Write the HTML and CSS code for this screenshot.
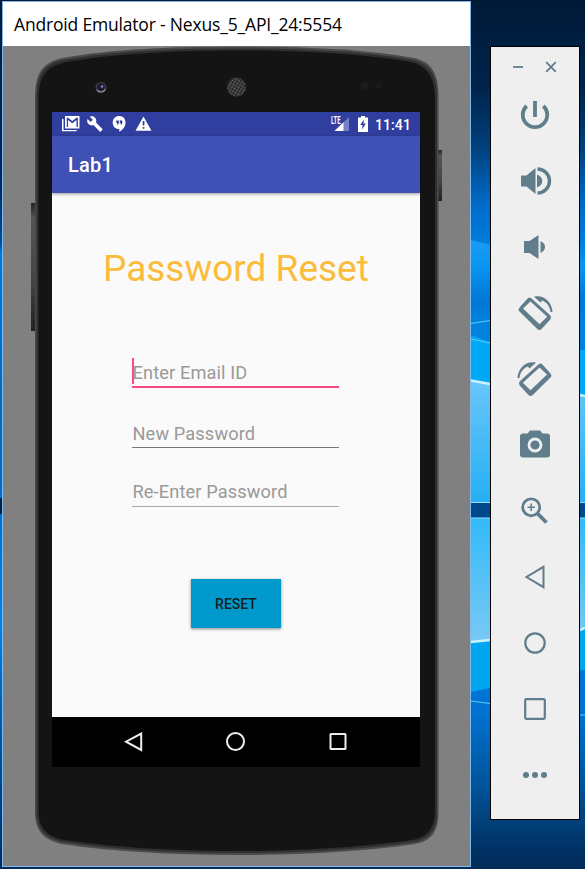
FILE: index.html
```html
<!DOCTYPE html>
<html lang="en">
<head>
<meta charset="utf-8">
<title>Android Emulator</title>
<link rel="stylesheet" href="styles.css">
</head>
<body>
<svg class="wallpaper" viewBox="0 0 585 869" aria-hidden="true">
  <defs>
    <linearGradient id="sky" x1="0" y1="0" x2="0" y2="1">
      <stop offset="0" stop-color="#001a38"/><stop offset=".1" stop-color="#00234a"/>
      <stop offset=".17" stop-color="#00407c"/><stop offset=".235" stop-color="#006bc8"/>
      <stop offset=".27" stop-color="#0078d8"/><stop offset=".3" stop-color="#0090ee"/><stop offset=".34" stop-color="#0074d2"/>
      <stop offset=".37" stop-color="#0082dc"/><stop offset=".69" stop-color="#0091e6"/>
      <stop offset=".75" stop-color="#0078dc"/><stop offset=".82" stop-color="#0072d0"/>
      <stop offset=".9" stop-color="#00559c"/><stop offset="1" stop-color="#002b58"/>
    </linearGradient>
    <linearGradient id="edge" x1="0" y1="0" x2="0" y2="1">
      <stop offset="0" stop-color="#001a38"/><stop offset=".22" stop-color="#002a58"/>
      <stop offset=".28" stop-color="#00509a"/><stop offset=".29" stop-color="#0078d8"/>
      <stop offset=".45" stop-color="#006cc0"/><stop offset=".56" stop-color="#006cc4"/>
      <stop offset=".72" stop-color="#0084e6"/><stop offset=".8" stop-color="#0064b8"/>
      <stop offset="1" stop-color="#002b58"/>
    </linearGradient>
    <linearGradient id="glow" x1="0" y1="0" x2="0" y2="1">
      <stop offset="0" stop-color="#1a9df6"/><stop offset="1" stop-color="#0090ee" stop-opacity="0"/>
    </linearGradient>
    <linearGradient id="pane1" x1="0" y1="0" x2="0" y2="1">
      <stop offset="0" stop-color="#69c6fa"/><stop offset="1" stop-color="#25aff2"/>
    </linearGradient>
    <linearGradient id="pane2" x1="0" y1="0" x2="0" y2="1">
      <stop offset="0" stop-color="#31baf8"/><stop offset="1" stop-color="#79c8f4"/>
    </linearGradient>
    <linearGradient id="corner" x1="0" y1="0" x2="0" y2="1">
      <stop offset="0" stop-color="#003f7c" stop-opacity="0"/><stop offset="1" stop-color="#002b58" stop-opacity=".6"/>
    </linearGradient>
  </defs>
  <rect width="585" height="869" fill="url(#sky)"/>
  <rect width="3" height="869" fill="url(#edge)"/>
  <path d="M471 240L490 245V300H471ZM580 260H585V310H580Z" fill="url(#glow)"/>
  <path d="M471 335L490 342V384L471 380ZM580 350H585V397H580Z" fill="#00a9f6"/>
  <path d="M471 380L490 384V503H471ZM580 395H585V503H580Z" fill="url(#pane1)"/>
  <path d="M471 518H490V640L471 642ZM580 518H585V628H580Z" fill="url(#pane2)"/>
  <path d="M471 642L490 640V688L471 692ZM580 630H585V670H580Z" fill="#00a5f0"/>
  <rect x="471" y="503" width="114" height="15" fill="#00498c"/>
  <rect y="498" width="3" height="16" fill="#002040"/>
  <path d="M471 502.500H490M471 518H490M580 502.500H585M580 518H585" stroke="#9bdcff"/>
  <path d="M471 323.500L490 320.500M471 701L490 703.500M580 715H585M471 339L490 343" stroke="#5fccf6" fill="none"/>
  <path d="M471 380.500L490 384M471 642L490 640M580 395L585 396M580 630L585 628" stroke="#c9f3ff" stroke-width="2.500"/>
  <rect x="471" y="800" width="114" height="69" fill="url(#corner)"/>
</svg>

<main class="desktop">
  <section class="window">
    <header class="titlebar">Android Emulator - Nexus_5_API_24:5554</header>
    <div class="stage">
      <svg class="phone" viewBox="3 46 467 820" aria-hidden="true">
        <defs>
          <pattern id="mesh" width="3" height="3" patternUnits="userSpaceOnUse" patternTransform="rotate(30)">
            <rect width="3" height="3" fill="#242424"/><circle cx="1.500" cy="1.500" r=".9" fill="#707070"/>
          </pattern>
          <linearGradient id="key" x1="0" y1="0" x2="0" y2="1"><stop stop-color="#222"/><stop offset=".12" stop-color="#555"/><stop offset=".6" stop-color="#444"/><stop offset="1" stop-color="#222"/></linearGradient>
        </defs>
        <rect x="31" y="203" width="5" height="128" fill="url(#key)"/>
        <rect x="437" y="150" width="5" height="51" fill="url(#key)"/>
        <path d="M35 98C35 72 43 63 62 58C112 49 174 46.500 237 46.500S362 49 414 58C431 62 438.500 72 438.500 98V812C438.500 832 431 841 415 844C365 851.500 302 855 237 855S112 851.500 62 844C44 840 35 831 35 812Z" fill="#4a4a4a"/>
        <path d="M36.500 98C36.500 73 45 64 63 60C112 51 174 48.500 237 48.500S361 51 413 60C429 64 437 74 437 98V812C437 831 429 839 414 842C365 849.500 302 853 237 853S112 849.500 63 842C45 838 36.500 830 36.500 812Z" fill="#303030"/>
        <path d="M38.500 100C38.500 76 46 67 64 62.500C112 53.500 174 50.500 237 50.500S361 53.500 411 62C427 66 435 77 435 100V810C435 829 427 837 412 840C364 847 302 851 237 851S112 847 64 840C46 836 38.500 828 38.500 810Z" fill="#141414"/>
        <circle cx="101" cy="87.500" r="5.500" fill="#3b3b4a"/>
        <circle cx="101" cy="87" r="3.700" fill="#191933"/>
        <path d="M97 90A5 5 0 0 0 105.500 89" fill="none" stroke="#85858e" stroke-width="1.300"/>
        <circle cx="102" cy="86.500" r="1.300" fill="#8787b5"/>
        <circle cx="236.500" cy="87" r="9.500" fill="url(#mesh)"/>
        <circle cx="365" cy="86" r="4" fill="#1c1c1c"/><circle cx="378.500" cy="86" r="2.500" fill="#1c1c1c"/>
      </svg>

      <div class="screen">
        <div class="statusbar">
          <svg class="notices" viewBox="0 0 94 18">
            <g fill="#fff">
              <path d="M0 3H1.500V14H14.500V15.300H0Z"/>
              <path fill-rule="evenodd" d="M3 0H17.500V12.500H3ZM4.800 1.800V11H6V4L10.300 7.300L14.500 4V11H15.900V1.800H14.500L10.300 5L6 1.800Z"/>
              <path transform="translate(24.500 -.400) scale(.7)" d="M22.700 19l-9.100-9.100c.9-2.300.4-5-1.500-6.900-2-2-5-2.400-7.400-1.300L9 6 6 9 1.600 4.700C.4 7.100.9 10.100 2.900 12.100c1.900 1.900 4.600 2.400 6.900 1.500l9.100 9.100c.4.400 1 .4 1.400 0l2.300-2.300c.5-.4.500-1.100.1-1.400z"/>
              <path d="M57.300 0C61 0 63.500 2.800 63.500 6.500C63.500 10.500 61 13.800 57.300 15.800V13C53 13 50.700 10.300 50.700 6.500S53.600 0 57.300 0Z"/>
              <path d="M81.500 .500L89.500 14.700H73.500Z"/>
            </g>
            <path d="M54.300 4.500H56.800V7Q56.800 8.500 55.300 9V7H54.300ZM57.800 4.500H60.300V7Q60.300 8.500 58.800 9V7H57.800ZM80.700 5H82.400V9.500H80.700ZM80.700 11H82.400V12.700H80.700Z" fill="#303f9f"/>
          </svg>
          <div class="system">
            <svg class="signal" viewBox="0 0 20 18">
              <path d="M19 1V15H4.500Z" fill="#7680c2"/><path d="M13.500 6.300V15H4.500Z" fill="#fff"/>
              <text class="lte" x="1" y="7.600" textLength="9.500" lengthAdjust="spacingAndGlyphs">LTE</text>
            </svg>
            <svg class="battery" viewBox="0 0 10 16"><path d="M3 0H7V1.500H10V16H0V1.500H3Z" fill="#fff"/><path d="M6 3.500L2.200 9H4.500L4 13.500L7.800 7.500H5.500Z" fill="#303f9f"/></svg>
            <span class="clock">11:41</span>
          </div>
        </div>
        <div class="appbar">Lab1</div>
        <form class="content">
          <h1 class="heading">Password Reset</h1>
          <div class="field focused"><span>Enter Email ID</span></div>
          <div class="field"><span>New Password</span></div>
          <div class="field last"><span>Re-Enter Password</span></div>
          <button class="reset" type="button">RESET</button>
        </form>
        <nav class="navbar">
          <svg viewBox="0 0 20 20"><path d="M17.200 1.500V18L2 9.700Z"/></svg>
          <svg viewBox="0 0 20 20"><circle cx="9.500" cy="9.500" r="8.500"/></svg>
          <svg viewBox="0 0 20 20"><rect x="2.500" y="2" width="15" height="15" rx=".5"/></svg>
        </nav>
      </div>
    </div>
  </section>

  <aside class="tools">
    <div class="controls">
      <svg viewBox="0 0 12 12"><path d="M1 6H11"/></svg>
      <svg viewBox="0 0 12 12"><path d="M1.200 1.200L10.800 10.800M10.800 1.200L1.200 10.800"/></svg>
    </div>
    <svg class="tool" viewBox="-18 -18 36 36"><g fill="none" stroke="#607d8b" stroke-width="3.800"><path d="M0-14V2" /><path d="M-8.300-9A12.200 12.200 0 1 0 8.300-9"/></g></svg>
    <svg class="tool" viewBox="-18 -18 36 36"><path d="M-14-5.500H-8.500L.5-13V13L-8.500 5.500H-14ZM2-6.500C9-4 9 4 2 6.500Z" fill="#607d8b"/><path d="M2.500-12A12 12 0 0 1 2.500 12" fill="none" stroke="#607d8b" stroke-width="3.400"/></svg>
    <svg class="tool" viewBox="-18 -18 36 36"><path d="M-11-6H-5.500L3.500-12V12L-5.500 6H-11ZM5.500-6C11.500-3.500 11.500 3.500 5.500 6Z" fill="#607d8b"/></svg>
    <svg class="tool" viewBox="-18 -18 36 36"><use href="#rotate"/></svg>
    <svg class="tool" viewBox="-18 -18 36 36"><use href="#rotate" transform="scale(-1 1)"/></svg>
    <svg class="tool" viewBox="-18 -18 36 36"><path d="M-12-11.500H-7.500L-5-14.500H5L7.500-11.500H12Q15-11.500 15-8.500V9.500Q15 12.500 12 12.500H-12Q-15 12.500-15 9.500V-8.500Q-15-11.500-12-11.500Z" fill="#607d8b"/><circle r="6" fill="none" stroke="#efefef" stroke-width="2.800"/></svg>
    <svg class="tool" viewBox="-18 -18 36 36"><g fill="none" stroke="#607d8b"><circle cx="-3.800" cy="-3.700" r="8.500" stroke-width="2.800"/><path d="M2.500 2.500L11.500 11.500" stroke-width="3.800"/><path d="M-7.500-3.700H0M-3.800-7.500V0" stroke-width="1.500"/></g></svg>
    <svg class="tool" viewBox="-18 -18 36 36"><path d="M8.500-10.200V10.200L-8.500 0Z" fill="none" stroke="#607d8b" stroke-width="2"/></svg>
    <svg class="tool" viewBox="-18 -18 36 36"><circle r="9.700" fill="none" stroke="#607d8b" stroke-width="2.200"/></svg>
    <svg class="tool" viewBox="-18 -18 36 36"><rect x="-9.800" y="-9.800" width="19.600" height="19.600" rx="1" fill="none" stroke="#607d8b" stroke-width="2.200"/></svg>
    <svg class="tool" viewBox="-18 -18 36 36"><g fill="#607d8b"><circle cx="-9" r="3"/><circle r="3"/><circle cx="9" r="3"/></g></svg>
    <svg class="symbols" aria-hidden="true"><defs><g id="rotate">
      <path fill="#607d8b" fill-rule="evenodd" d="M-7.200-14.800Q-5.200-16.200-3.400-14.500L15.200 2.300Q17 4.300 15.500 6.300L6.500 16Q4.500 17.800 2.500 16.300L-15.500-1.500Q-17.200-3.500-15.500-5.500ZM-4.500-11.500L-12-4.500L4.500 11.300L12.200 3.800Z"/>
      <path fill="#607d8b" d="M-1-16.200C9-18.800 17-10.500 17.500-1H15.500C14.800-6.500 12-10.800 7-12.500L5.500-10.500Z"/>
    </g></defs></svg>
  </aside>
</main>
</body>
</html>
```

FILE: styles.css
```css
* { box-sizing: border-box; }
body { margin: 0; width: 585px; height: 869px; overflow: hidden; background: #001a38; font-family: Roboto, sans-serif; }
svg { display: block; }
.wallpaper { position: absolute; inset: 0; width: 585px; height: 869px; z-index: -1; }
.desktop { display: flex; align-items: flex-start; gap: 19px; padding: 1px 0 0 2px; }
.window { width: 469px; height: 866px; border: 1px solid #82b9ed; background: #808080; }
.titlebar { height: 44px; padding-left: 11px; background: #fff; color: #000; font: 17.5px/45px "Open Sans", sans-serif; letter-spacing: -.18px; white-space: nowrap; }
.stage { position: relative; height: 820px; padding: 66px 0 0 49px; }
.phone { position: absolute; inset: 0; width: 467px; height: 820px; }
.screen { position: relative; display: flex; flex-direction: column; width: 368px; height: 655px; background: #fafafa; }
.statusbar { display: flex; justify-content: space-between; height: 24px; padding: 4px 9px 0 10px; background: #303f9f; color: #fff; }
.notices { width: 94px; height: 18px; }
.system { display: flex; gap: 8px; }
.signal { width: 20px; height: 18px; overflow: visible; }
.battery { width: 10px; height: 16px; }
.lte { font: bold 10px Roboto, sans-serif; fill: #fff; }
.clock { margin-left: -1px; font-size: 14px; line-height: 18px; font-weight: 500; letter-spacing: .1px; }
.appbar { position: relative; height: 57px; padding-left: 16px; background: #3f51b5; color: #fff; font-size: 20px; line-height: 59px; font-weight: 500; letter-spacing: .2px; box-shadow: 0 1px 3px #0006; }
.content { display: flex; flex: 1; flex-direction: column; align-items: flex-start; padding-left: 80px; }
.heading { margin: 52px 0 0 -29px; color: #fbbc3b; font-size: 37px; line-height: 47px; font-weight: 400; white-space: nowrap; }
.field { width: 207px; height: 34px; margin-top: 26px; padding-top: 7px; border-bottom: 1px solid #777; color: #999; font-size: 18.2px; line-height: 26px; letter-spacing: .13px; text-indent: .5px; }
.field.focused { height: 30px; margin-top: 66px; padding: 0 0 3px; border-bottom: 2px solid #f44c83; }
.focused span { display: block; border-left: 2px solid #f44c83; line-height: 29px; height: 26px; text-indent: -1.5px; }
.field.last { height: 33px; padding-top: 5px; border-bottom: 1px solid #aaa; }
.reset { width: 90px; height: 49px; margin: 72px 0 0 59px; padding: 0; border: 0; background: #0099cc; color: #141e23; font: 500 14px Roboto, sans-serif; box-shadow: 0 1px 3px #0007; }
.navbar { display: flex; justify-content: center; gap: 82px; height: 50px; padding-top: 15px; background: #000; }
.navbar svg { width: 20px; height: 20px; fill: none; stroke: #eee; stroke-width: 2; }
.tools { width: 90px; height: 774px; margin-top: 45px; border: 1px solid #000; background: #efefef; display: flex; flex-direction: column; align-items: center; gap: 30px; }
.controls { display: flex; align-self: stretch; gap: 21px; height: 20px; padding: 14px 0 0 21px; }
.controls svg { width: 12px; height: 12px; fill: none; stroke: #607d8b; stroke-width: 1.8; }
.tool { width: 36px; height: 36px; flex: none; }
.symbols { width: 0; height: 0; }
```
